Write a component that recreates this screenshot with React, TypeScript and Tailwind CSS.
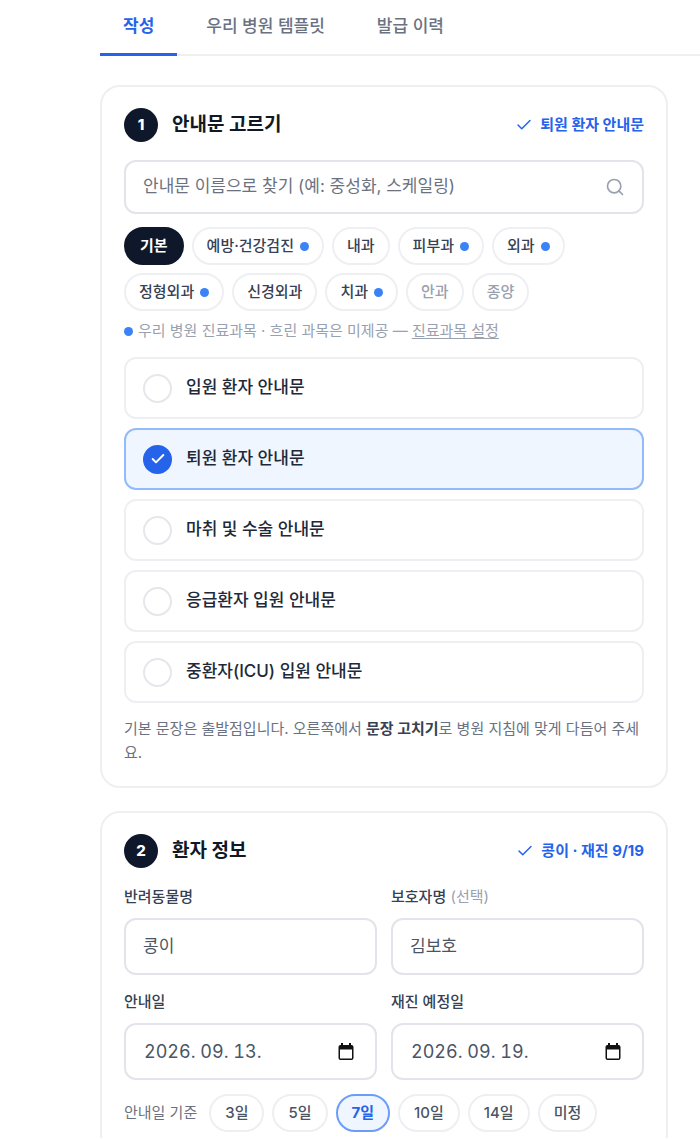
import { useState } from "react";
import { Check, Search } from "lucide-react";

const tabs = ["작성", "우리 병원 템플릿", "발급 이력"];

const subjects = [
  { name: "기본" },
  { name: "예방·건강검진", own: true },
  { name: "내과" },
  { name: "피부과", own: true },
  { name: "외과", own: true },
  { name: "정형외과", own: true },
  { name: "신경외과" },
  { name: "치과", own: true },
  { name: "안과", off: true },
  { name: "종양", off: true },
];

const guides = [
  "입원 환자 안내문",
  "퇴원 환자 안내문",
  "마취 및 수술 안내문",
  "응급환자 입원 안내문",
  "중환자(ICU) 입원 안내문",
];

const periods = ["3일", "5일", "7일", "10일", "14일", "미정"];

function Dot() {
  return <span className="size-[9px] shrink-0 rounded-full bg-[#3b82f6]" />;
}

function CardHeader({ step, title, summary }: { step: number; title: string; summary: string }) {
  return (
    <header className="flex items-center">
      <span className="flex size-[34px] items-center justify-center rounded-full bg-[#0f172a] text-[15px] font-extrabold text-white">
        {step}
      </span>
      <h2 className="ml-[14px] text-[19px] leading-7 font-bold text-gray-900">{title}</h2>
      <span className="ml-auto flex items-center gap-[7px] text-[15px] leading-6 font-bold text-[#2563eb]">
        <Check size={18} strokeWidth={2} aria-hidden="true" />
        {summary}
      </span>
    </header>
  );
}

function CalendarIcon() {
  return (
    <svg viewBox="0 0 18 18" className="size-[18px]" aria-hidden="true">
      <path
        fill="#111"
        fillRule="evenodd"
        d="M4 0h2v2h6V0h2v2h.5A2 2 0 0 1 16.500 4v11a2 2 0 0 1-2 2h-11a2 2 0 0 1-2-2V4a2 2 0 0 1 2-2H4zM3 6.500V15a.5.5 0 0 0 .5.5h11a.5.5 0 0 0 .5-.5V6.500z"
      />
    </svg>
  );
}

const fieldBox =
  "h-[57px] w-full rounded-xl border-2 border-[#e2e4e9] bg-white px-[17px] pb-1 text-[17px] text-gray-600 outline-none";
const labelText = "text-[15px] leading-6 font-medium text-gray-700";

function TextField({ id, label, optional, value }: { id: string; label: string; optional?: boolean; value: string }) {
  return (
    <div className="flex min-w-0 flex-col gap-[9px]">
      <label htmlFor={id} className={labelText}>
        {label}
        {optional && <span className="font-normal text-gray-400"> (선택)</span>}
      </label>
      <input id={id} defaultValue={value} className={fieldBox} />
    </div>
  );
}

function DateField({ id, label, value }: { id: string; label: string; value: string }) {
  return (
    <div className="flex min-w-0 flex-col gap-[9px]">
      <label htmlFor={id} className={labelText}>
        {label}
      </label>
      <div className="flex h-[57px] items-center rounded-xl border-2 border-[#e2e4e9] bg-white pr-5 pl-[18px]">
        <input
          id={id}
          defaultValue={value}
          className="w-full min-w-0 bg-transparent text-[18px] text-gray-600 tabular-nums outline-none"
        />
        <button type="button" aria-label={label + " 선택"}>
          <CalendarIcon />
        </button>
      </div>
    </div>
  );
}

export default function App() {
  const [tab, setTab] = useState("작성");
  const [subject, setSubject] = useState("기본");
  const [guide, setGuide] = useState("퇴원 환자 안내문");
  const [period, setPeriod] = useState("7일");

  return (
    <div className="bg-white pl-[100px] font-['Inter','Noto_Sans_CJK_KR',sans-serif] text-gray-700">
      <nav className="flex gap-[6px] border-b-2 border-[#eeeff1]">
        {tabs.map((name) => (
          <button
            key={name}
            type="button"
            onClick={() => setTab(name)}
            className={
              name === tab
                ? "-mb-[2px] h-14 border-b-3 border-[#2563eb] px-[23px] text-[17px] font-bold text-[#2563eb]"
                : "-mb-[2px] h-14 border-b-3 border-transparent px-[23px] text-[17px] font-medium text-gray-500"
            }
          >
            {name}
          </button>
        ))}
      </nav>

      <main className="flex flex-col gap-[23px] pt-[29px] pr-8 pb-6">
        <section className="rounded-[20px] border-2 border-[#eeeff1] px-[22px] pt-[21px] pb-[21px]">
          <CardHeader step={1} title="안내문 고르기" summary="퇴원 환자 안내문" />

          <div className="mt-[18px] flex h-[54px] items-center rounded-xl border-2 border-[#e2e4e9] pr-[17px] pl-[17px]">
            <input
              type="search"
              aria-label="안내문 이름으로 찾기"
              placeholder="안내문 이름으로 찾기 (예: 중성화, 스케일링)"
              className="w-full min-w-0 bg-transparent text-[17px] outline-none placeholder:text-gray-500"
            />
            <Search size={20} strokeWidth={2} className="shrink-0 text-gray-400" aria-hidden="true" />
          </div>

          <div className="mt-[13px] flex flex-wrap gap-2">
            {subjects.map((s) => (
              <button
                key={s.name}
                type="button"
                disabled={s.off}
                onClick={() => setSubject(s.name)}
                className={
                  s.name === subject
                    ? "flex h-[38px] items-center rounded-full border-2 border-[#0f172a] bg-[#0f172a] px-[14px] text-[15px] font-bold text-white"
                    : s.off
                      ? "flex h-[38px] items-center rounded-full border-2 border-[#eeeff2] px-[13px] text-[15px] font-medium text-gray-400"
                      : "flex h-[38px] items-center gap-[6px] rounded-full border-2 border-[#eeeff2] px-[13px] text-[15px] font-medium text-gray-700"
                }
              >
                {s.name}
                {s.own && <Dot />}
              </button>
            ))}
          </div>

          <p className="mt-2 flex items-center gap-[5px] text-[15px] leading-6 text-gray-400">
            <Dot />
            <span>
              우리 병원 진료과목 · 흐린 과목은 미제공 —{" "}
              <a href="#subjects" className="underline underline-offset-2">
                진료과목 설정
              </a>
            </span>
          </p>

          <div role="radiogroup" aria-label="안내문" className="mt-[14px] flex flex-col gap-[9px]">
            {guides.map((name) => (
              <label
                key={name}
                className={
                  name === guide
                    ? "flex h-[62px] items-center gap-[14px] rounded-xl border-2 border-[#93bbf9] bg-[#eff6ff] px-[17px] text-[17px] font-medium text-gray-800"
                    : "flex h-[62px] items-center gap-[14px] rounded-xl border-2 border-[#eeeff2] px-[17px] text-[17px] font-medium text-gray-800"
                }
              >
                <span className="grid size-[29px] place-items-center">
                  <input
                    type="radio"
                    name="guide"
                    checked={name === guide}
                    onChange={() => setGuide(name)}
                    className="col-start-1 row-start-1 size-[29px] appearance-none rounded-full border-2 border-gray-200 bg-white checked:border-[#2563eb] checked:bg-[#2563eb]"
                  />
                  {name === guide && (
                    <Check
                      size={16}
                      strokeWidth={3}
                      className="z-10 col-start-1 row-start-1 text-white"
                      aria-hidden="true"
                    />
                  )}
                </span>
                {name}
              </label>
            ))}
          </div>

          <p className="mt-[14px] text-[15px] leading-6 break-all text-gray-500">
            기본 문장은 출발점입니다. 오른쪽에서 <strong className="font-bold text-gray-700">문장 고치기</strong>로 병원
            지침에 맞게 다듬어 주세요.
          </p>
        </section>

        <section className="rounded-[20px] border-2 border-[#eeeff1] px-[22px] pt-[21px] pb-[21px]">
          <CardHeader step={2} title="환자 정보" summary="콩이 · 재진 9/19" />

          <div className="mt-[17px] grid grid-cols-2 gap-x-[14px] gap-y-[15px]">
            <TextField id="pet" label="반려동물명" value="콩이" />
            <TextField id="owner" label="보호자명" optional value="김보호" />
            <DateField id="guide-date" label="안내일" value="2026. 09. 13." />
            <DateField id="revisit-date" label="재진 예정일" value="2026. 09. 19." />
          </div>

          <div className="mt-[14px] flex flex-wrap items-center gap-2">
            <span className="mr-1 text-[15px] leading-6 text-gray-500">안내일 기준</span>
            {periods.map((name) => (
              <button
                key={name}
                type="button"
                onClick={() => setPeriod(name)}
                className={
                  name === period
                    ? "h-[38px] rounded-full border-2 border-[#6b9df8] bg-[#eff6ff] px-[14px] text-[15px] font-bold text-[#2563eb]"
                    : "h-[38px] rounded-full border-2 border-[#eeeff2] px-[14px] text-[15px] font-medium text-gray-600"
                }
              >
                {name}
              </button>
            ))}
          </div>
        </section>
      </main>
    </div>
  );
}
